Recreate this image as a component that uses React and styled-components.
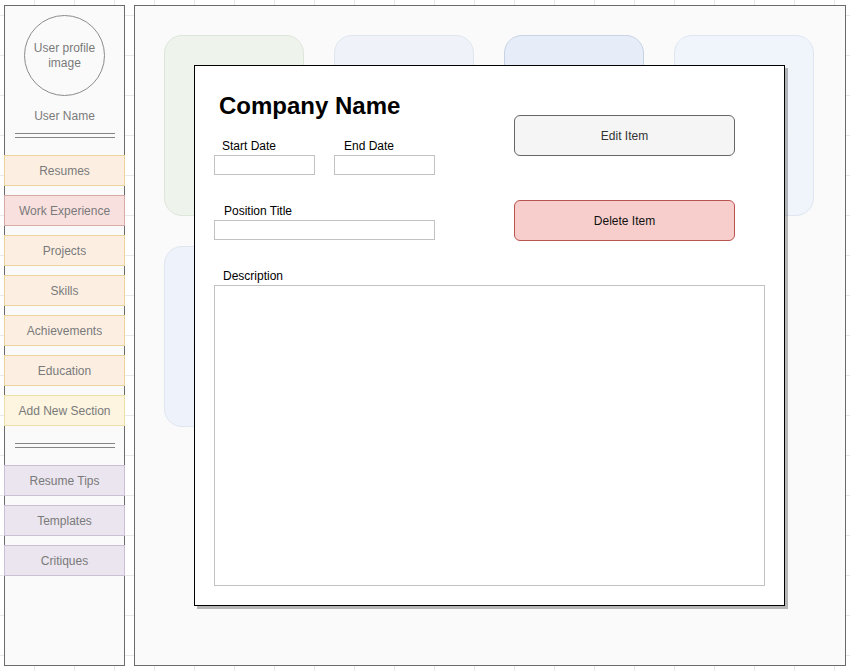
import React from "react";
import styled, { createGlobalStyle } from "styled-components";

const GlobalStyle = createGlobalStyle`
  html, body {
    margin: 0;
    padding: 0;
    background-color: #ffffff;
    background-image:
      linear-gradient(to right, #e8e8e8 1px, transparent 1px),
      linear-gradient(to bottom, #e8e8e8 1px, transparent 1px);
    background-size: 40px 40px;
    background-position: 34px 15px;
    font-family: "Liberation Sans", Arial, sans-serif;
  }
  * {
    box-sizing: border-box;
  }
`;

const sections = [
  { label: "Resumes", fill: "#fcefe2", stroke: "#ecd49a" },
  { label: "Work Experience", fill: "#f8e0df", stroke: "#d8aaa8" },
  { label: "Projects", fill: "#fcefe2", stroke: "#ecd49a" },
  { label: "Skills", fill: "#fcefe2", stroke: "#ecd49a" },
  { label: "Achievements", fill: "#fcefe2", stroke: "#ecd49a" },
  { label: "Education", fill: "#fcefe2", stroke: "#ecd49a" },
  { label: "Add New Section", fill: "#fdf5e0", stroke: "#eedfa8" },
];

const extras = [
  { label: "Resume Tips", fill: "#eae5ee", stroke: "#cbbfd6" },
  { label: "Templates", fill: "#eae5ee", stroke: "#cbbfd6" },
  { label: "Critiques", fill: "#eae5ee", stroke: "#cbbfd6" },
];

const cards = [
  { fill: "#eef3ec", stroke: "#dde7d9", text: "" },
  { fill: "#eff3f9", stroke: "#e0e6ef", text: "" },
  { fill: "#e7edf8", stroke: "#c7d2e3", text: "" },
  { fill: "#f0f4fb", stroke: "#dfe6f1", text: "Job Experience" },
  { fill: "#eef2fa", stroke: "#dfe6f0", text: "Software Intern" },
];

const App = () => {
  return (
    <>
      <GlobalStyle />
      <Page>
        <Sidebar>
          <Avatar>User profile image</Avatar>
          <UserName>User Name</UserName>
          <DoubleRule />
          <NavList>
            {sections.map((item) => (
              <NavItem key={item.label} $fill={item.fill} $stroke={item.stroke}>
                {item.label}
              </NavItem>
            ))}
          </NavList>
          <DoubleRule $top={18} />
          <NavList>
            {extras.map((item) => (
              <NavItem key={item.label} $fill={item.fill} $stroke={item.stroke}>
                {item.label}
              </NavItem>
            ))}
          </NavList>
        </Sidebar>

        <Main>
          <CardGrid>
            {cards.map((card, index) => (
              <Card key={index} $fill={card.fill} $stroke={card.stroke}>
                {card.text}
              </Card>
            ))}
          </CardGrid>

          <Modal>
            <LeftColumn>
              <Title>Company Name</Title>
              <DateRow>
                <Field>
                  <Label $indent={8}>Start Date</Label>
                  <TextInput $width={101} readOnly />
                </Field>
                <Field>
                  <Label $indent={10}>End Date</Label>
                  <TextInput $width={101} readOnly />
                </Field>
              </DateRow>
              <Field $top={30}>
                <Label $indent={10}>Position Title</Label>
                <TextInput $width={221} readOnly />
              </Field>
            </LeftColumn>

            <RightColumn>
              <ActionButton type="button">Edit Item</ActionButton>
              <ActionButton type="button" $danger>
                Delete Item
              </ActionButton>
            </RightColumn>

            <Description>
              <Label $indent={9}>Description</Label>
              <TextArea readOnly />
            </Description>
          </Modal>
        </Main>
      </Page>
    </>
  );
};

const Page = styled.div`
  display: flex;
  gap: 9px;
  padding: 5px 0 0 4px;
`;

const Sidebar = styled.aside`
  width: 121px;
  height: 661px;
  border: 1px solid #6b6b6b;
  background: #fafafa;
  display: flex;
  flex-direction: column;
  align-items: center;
`;

const Avatar = styled.div`
  width: 81px;
  height: 81px;
  margin-top: 9px;
  border: 1px solid #8c8c8c;
  border-radius: 50%;
  display: flex;
  align-items: center;
  justify-content: center;
  text-align: center;
  padding: 0 6px;
  font-size: 12px;
  line-height: 15px;
  color: #7a7a7a;
`;

const UserName = styled.div`
  margin-top: 13px;
  font-size: 12px;
  line-height: 14px;
  color: #7a7a7a;
`;

const DoubleRule = styled.div`
  width: 100px;
  height: 5px;
  margin-top: ${(p) => p.$top || 10}px;
  margin-bottom: 17px;
  border-top: 1px solid #858585;
  border-bottom: 1px solid #858585;
`;

const NavList = styled.nav`
  align-self: stretch;
  margin: 0 -1px;
  display: flex;
  flex-direction: column;
  gap: 10px;
`;

const NavItem = styled.div`
  height: 31px;
  margin-bottom: -1px;
  border: 1px solid ${(p) => p.$stroke};
  background: ${(p) => p.$fill};
  display: flex;
  align-items: center;
  justify-content: center;
  font-size: 12px;
  color: #7a7a7a;
`;

const Main = styled.main`
  position: relative;
  width: 712px;
  height: 661px;
  border: 1px solid #6b6b6b;
  background: #fafafa;
  padding: 29px;
`;

const CardGrid = styled.div`
  display: grid;
  grid-template-columns: repeat(4, 140px);
  gap: 30px;
`;

const Card = styled.div`
  height: 181px;
  border-radius: 18px;
  border: 1px solid ${(p) => p.$stroke};
  background: ${(p) => p.$fill};
  display: flex;
  align-items: center;
  justify-content: center;
  padding-top: 14px;
  font-size: 12px;
  color: #a0a0a0;
`;

const Modal = styled.section`
  position: absolute;
  left: 59px;
  top: 59px;
  width: 591px;
  height: 541px;
  border: 1px solid #000;
  background: #fff;
  box-shadow: 3px 3px 0 0 rgba(0, 0, 0, 0.27);
  padding: 25px 19px 19px;
  display: grid;
  grid-template-columns: 220px 220px;
  grid-template-rows: auto 1fr;
  column-gap: 80px;
  align-content: start;
`;

const LeftColumn = styled.div`
  display: flex;
  flex-direction: column;
`;

const Title = styled.h1`
  margin: 0;
  padding-left: 5px;
  font-size: 24px;
  line-height: 30px;
  font-weight: 700;
  color: #000;
`;

const DateRow = styled.div`
  margin-top: 19px;
  display: flex;
  gap: 19px;
`;

const Field = styled.div`
  display: flex;
  flex-direction: column;
  margin-top: ${(p) => p.$top || 0}px;
`;

const Label = styled.span`
  padding-left: ${(p) => p.$indent}px;
  margin-bottom: 2px;
  font-size: 12px;
  line-height: 13px;
  color: #000;
`;

const TextInput = styled.input`
  width: ${(p) => p.$width}px;
  height: 20px;
  margin: 0;
  padding: 0 4px;
  border: 1px solid #c2c2c2;
  border-radius: 0;
  background: #fff;
  outline: none;
  font: inherit;
`;

const RightColumn = styled.div`
  display: flex;
  flex-direction: column;
  gap: 44px;
  padding-top: 24px;
`;

const ActionButton = styled.button`
  width: 221px;
  height: 41px;
  border-radius: 6px;
  border: 1px solid ${(p) => (p.$danger ? "#b85450" : "#666666")};
  background: ${(p) => (p.$danger ? "#f8cecc" : "#f5f5f5")};
  color: ${(p) => (p.$danger ? "#111" : "#333")};
  font-family: "Liberation Sans", Arial, sans-serif;
  font-size: 12px;
  padding: 0;
  cursor: pointer;
`;

const Description = styled.div`
  grid-column: 1 / -1;
  margin-top: 29px;
  display: flex;
  flex-direction: column;
`;

const TextArea = styled.textarea`
  width: 551px;
  height: 301px;
  margin: 0;
  border: 1px solid #c2c2c2;
  border-radius: 0;
  background: #fff;
  outline: none;
  resize: none;
  font: inherit;
`;

export default App;
